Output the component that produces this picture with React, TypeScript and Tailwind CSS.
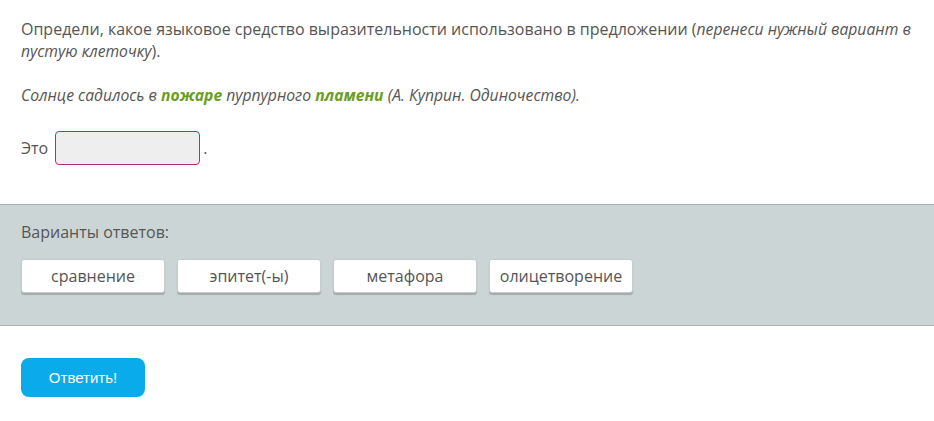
import React from "react";

const options = ["сравнение", "эпитет(-ы)", "метафора", "олицетворение"];

const App = () => {
  return (
    <div className="w-[934px] h-[421px] bg-white text-[16px] leading-[22px] text-[#555] font-['Open_Sans',sans-serif]">
      <div className="pl-[21px] pr-[14px] pt-[18px]">
        <p>
          Определи, какое языковое средство выразительности использовано в предложении (
          <i className="text-[15.7px]">перенеси нужный вариант в пустую клеточку</i>).
        </p>
        <p className="mt-[22px] italic text-[15.7px]">
          Солнце садилось в <b className="text-[#6a9e1f]">пожаре</b> пурпурного{" "}
          <b className="text-[#6a9e1f]">пламени</b> (А. Куприн. Одиночество).
        </p>
        <div className="flex items-center mt-[25px]">
          <span>Это</span>
          <div className="ml-[7px] w-[145px] h-[34px] rounded-[4px] border border-[#a8337a] bg-[#eeeeee]" />
          <span className="ml-[3px]">.</span>
        </div>
      </div>

      <div className="mt-[39px] border-t border-b border-[#aab4b4] bg-[#ccd5d6] px-[21px] pt-[16px] pb-[32px]">
        <div>Варианты ответов:</div>
        <div className="flex gap-[12px] mt-[16px]">
          {options.map((o) => (
            <div
              key={o}
              className="h-[34px] w-[144px] flex items-center justify-center bg-white rounded-[3px] border border-[#c4cccc] shadow-[0_2px_1px_rgba(0,0,0,0.2)]"
            >
              {o}
            </div>
          ))}
        </div>
      </div>

      <div className="px-[21px] mt-[32px]">
        <button className="w-[124px] h-[39px] rounded-[8px] bg-[#0aabeb] text-white text-[15px] font-['Liberation_Sans',Arial,sans-serif]">
          Ответить!
        </button>
      </div>
    </div>
  );
};

export default App;
